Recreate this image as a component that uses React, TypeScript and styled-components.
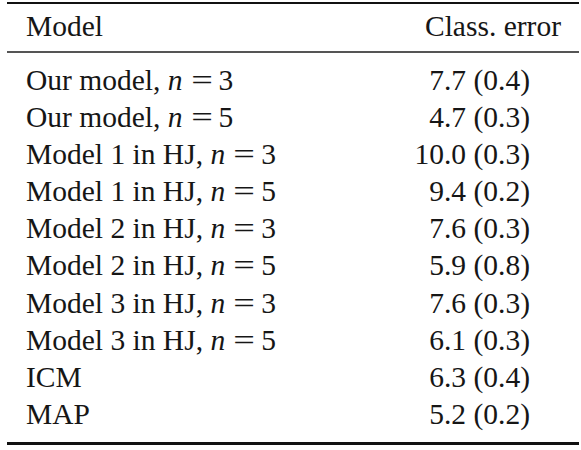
import React from 'react'
import styled, { createGlobalStyle } from 'styled-components'

const GlobalStyle = createGlobalStyle`
  html, body {
    margin: 0;
    padding: 0;
    background: #fff;
  }
  body {
    font-family: "Liberation Serif", "Times New Roman", serif;
    color: #161616;
  }
`

const Table = styled.div`
  margin: 2px 2px 0 7px;
  width: 572px;
  border-top: 2px solid #111;
  border-bottom: 3px solid #111;
  font-size: 29.5px;
`

const HeadRow = styled.div`
  display: flex;
  justify-content: space-between;
  padding: 4px 0 6px;
  line-height: 37px;
  border-bottom: 2px solid #555;
`

const Body = styled.div`
  display: flex;
  flex-direction: column;
  padding: 9px 0 9px;
`

const Row = styled.div`
  display: flex;
  justify-content: space-between;
  line-height: 37.1px;
  height: 37.1px;
`

const Label = styled.span`
  padding-left: 19px;
  white-space: nowrap;
`

const Value = styled.span<{ $pad: number }>`
  padding-right: ${p => p.$pad}px;
  text-align: right;
  white-space: nowrap;
`

const Var = styled.i`
  font-style: italic;
`

const Eq = styled.span`
  display: inline-block;
  width: 22px;
  margin: 0 6px 0 8px;
  text-align: center;
  transform: scaleX(1.3);
`

type Entry = { model: string; n?: number; err: string }

const rows: Entry[] = [
  { model: 'Our model,', n: 3, err: '7.7 (0.4)' },
  { model: 'Our model,', n: 5, err: '4.7 (0.3)' },
  { model: 'Model 1 in HJ,', n: 3, err: '10.0 (0.3)' },
  { model: 'Model 1 in HJ,', n: 5, err: '9.4 (0.2)' },
  { model: 'Model 2 in HJ,', n: 3, err: '7.6 (0.3)' },
  { model: 'Model 2 in HJ,', n: 5, err: '5.9 (0.8)' },
  { model: 'Model 3 in HJ,', n: 3, err: '7.6 (0.3)' },
  { model: 'Model 3 in HJ,', n: 5, err: '6.1 (0.3)' },
  { model: 'ICM', err: '6.3 (0.4)' },
  { model: 'MAP', err: '5.2 (0.2)' },
]

const App = () => {
  return (
    <>
      <GlobalStyle />
      <Table>
        <HeadRow>
          <Label>Model</Label>
          <Value $pad={18}>Class. error</Value>
        </HeadRow>
        <Body>
          {rows.map((r, i) => (
            <Row key={i}>
              <Label>
                {r.model}
                {r.n !== undefined && (
                  <>
                    {' '}
                    <Var>n</Var>
                    <Eq>=</Eq>
                    {r.n}
                  </>
                )}
              </Label>
              <Value $pad={49}>{r.err}</Value>
            </Row>
          ))}
        </Body>
      </Table>
    </>
  )
}

export default App
